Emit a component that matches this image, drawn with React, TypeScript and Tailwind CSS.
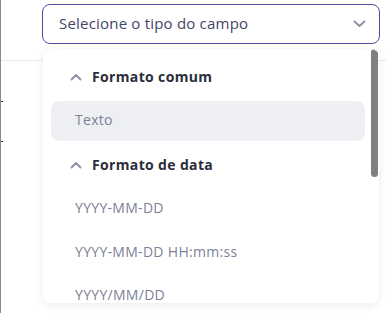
import React from "react";

const ChevronDown = () => (
  <svg width="13" height="8" viewBox="0 0 13 8" fill="none">
    <path d="M1.5 1.5 L6.5 6 L11.5 1.5" stroke="#8b90a3" strokeWidth="1.8" strokeLinecap="round" strokeLinejoin="round" />
  </svg>
);

const ChevronUp = () => (
  <svg width="12" height="8" viewBox="0 0 12 8" fill="none">
    <path d="M1.5 6.5 L6 2 L10.5 6.5" stroke="#8b90a3" strokeWidth="1.8" strokeLinecap="round" strokeLinejoin="round" />
  </svg>
);

const Header = ({ label }: { label: string }) => (
  <div className="h-[44px] flex items-center pl-[19px] gap-[10px]">
    <ChevronUp />
    <span className="text-[14px] font-bold tracking-[0.35px] text-[#2c2d3a] leading-none">{label}</span>
  </div>
);

const Item = ({ label, active }: { label: string; active?: boolean }) => (
  <div className="h-[44px] py-[2px]">
    <div
      className={
        "h-[40px] rounded-[8px] flex items-center pl-[24px] pb-[3px] text-[14px] tracking-[0.3px] text-[#7c8197] " +
        (active ? "bg-[#eeeff2]" : "")
      }
    >
      {label}
    </div>
  </div>
);

export default function App() {
  return (
    <div
      className="relative w-[387px] h-[313px] bg-white overflow-hidden border-l border-[#8a8a8a]"
      style={{ fontFamily: '"Open Sans", "Noto Sans", sans-serif' }}
    >
      <div className="h-[61px] border-b border-[#e8e9ec]">
        <div className="pt-[4px] pl-[41px]">
          <div className="w-[338px] h-[40px] border border-[#4b4f9b] rounded-[8px] flex items-center justify-between pl-[16px] pr-[13px]">
            <span className="text-[15px] tracking-[0.2px] text-[#3f4668] pb-[2px]">Selecione o tipo do campo</span>
            <ChevronDown />
          </div>
        </div>
      </div>
      <div className="absolute left-0 top-[101px] w-[2px] h-[1px] bg-[#2a2a6a]" />
      <div className="absolute left-0 top-[141px] w-[2px] h-[1px] bg-[#2a2a6a]" />

      <div className="absolute left-[42px] top-[49px] w-[336px] h-[254px] bg-white rounded-[8px] shadow-[0_2px_10px_rgba(0,0,0,0.08)] overflow-hidden">
        <div className="pt-[6px] pl-[8px] pr-[14px]">
          <Header label="Formato comum" />
          <Item label="Texto" active />
          <Header label="Formato de data" />
          <Item label="YYYY-MM-DD" />
          <Item label="YYYY-MM-DD HH:mm:ss" />
          <div className="h-[28px] pt-[12px] pl-[24px] text-[14px] leading-[16px] tracking-[0.3px] text-[#7c8197]">
            YYYY/MM/DD
          </div>
        </div>
        <div className="absolute right-[1px] top-0 w-[7px] h-[128px] rounded-full bg-[#808080]" />
      </div>
    </div>
  );
}
